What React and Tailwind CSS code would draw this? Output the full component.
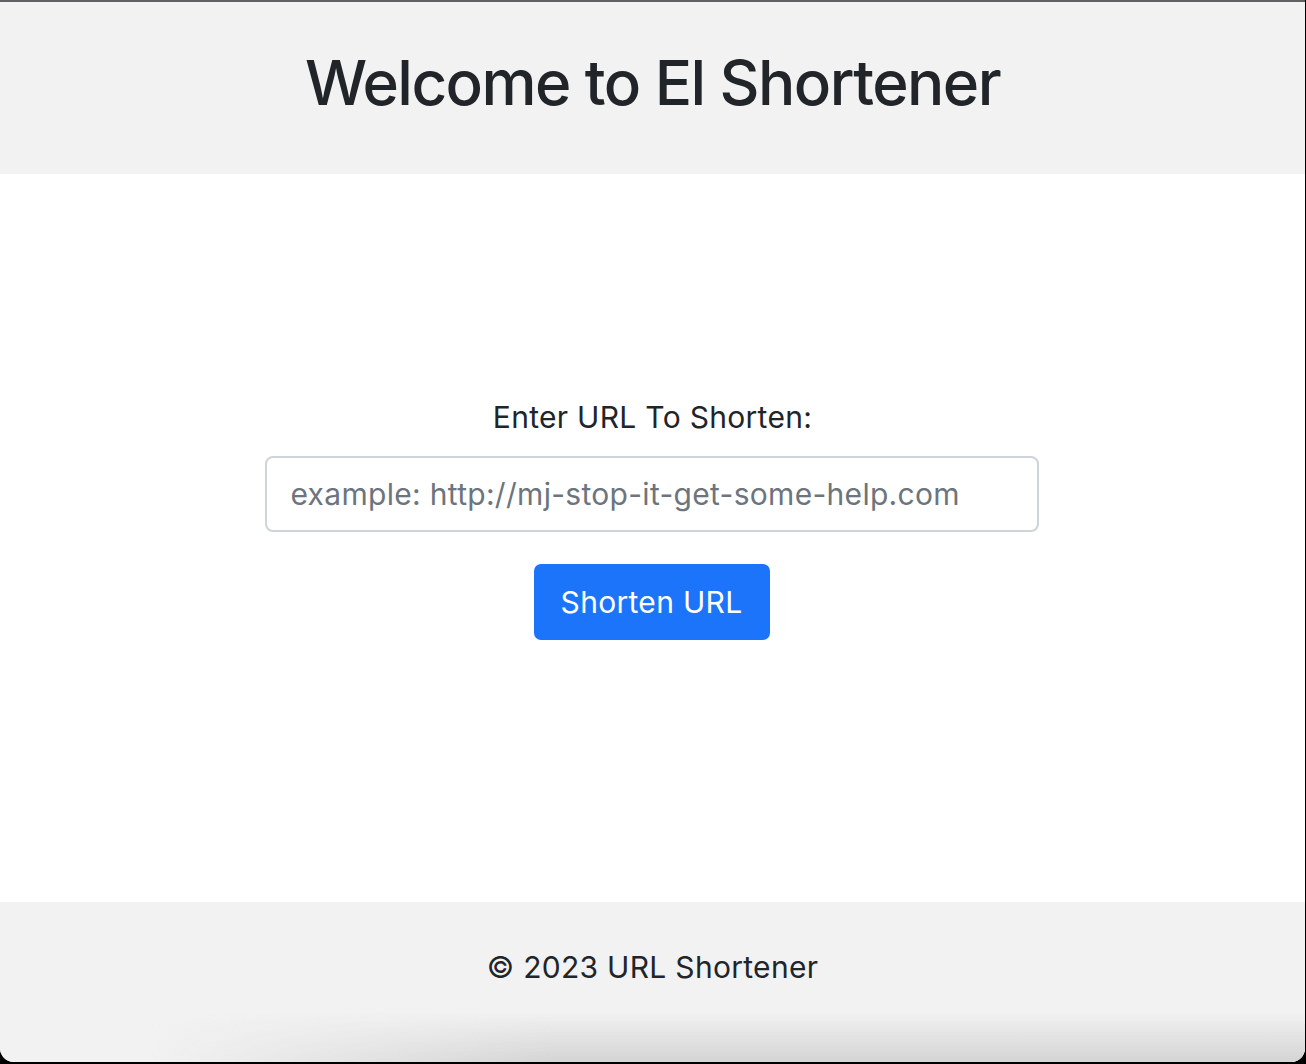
export default function App() {
  return (
    <div className="h-[1064px] w-full bg-black font-['Inter','Liberation_Sans',sans-serif] text-[#212529]">
      <div className="relative flex h-[1062px] flex-col overflow-hidden rounded-b-[14px] bg-white mr-px">
        {/* Top edge */}
        <div className="h-[2px] bg-[#616164] flex-shrink-0" />

        {/* Header */}
        <header className="flex h-[172px] flex-shrink-0 items-center justify-center bg-[#f2f2f2]">
          <h1 className="text-[62px] font-medium leading-none tracking-[-1.55px] pb-[10px]">Welcome to El Shortener</h1>
        </header>

        {/* Form */}
        <main className="flex h-[728px] flex-shrink-0 flex-col items-center pt-[222px] tracking-[0.3px]">
          <label htmlFor="url" className="text-[30px] leading-[42px]">
            Enter URL To Shorten:
          </label>
          <input
            id="url"
            type="text"
            placeholder="example: http://mj-stop-it-get-some-help.com"
            className="mt-[18px] h-[76px] w-[774px] rounded-[8px] border-2 border-[#ced4da] bg-white px-[24px] text-[30px] tracking-[0.3px] text-[#212529] placeholder:text-[#6c757d] outline-none -ml-[2px]"
          />
          <button className="mt-[32px] h-[76px] w-[236px] rounded-[7px] bg-[#1c74fb] text-[30px] tracking-[0.3px] text-white -ml-[2px]">
            Shorten URL
          </button>
        </main>

        {/* Footer */}
        <footer className="relative flex flex-1 items-center justify-center bg-[#f2f2f2] pb-[30px]">
          <p className="text-[30px] leading-none tracking-[0.3px]">© 2023 URL Shortener</p>
          <div className="pointer-events-none absolute bottom-0 left-[150px] right-0 h-[50px] bg-gradient-to-b from-transparent to-[#d4d4d4] [mask-image:linear-gradient(to_right,transparent,black_35%)]" />
        </footer>
      </div>
    </div>
  )
}
